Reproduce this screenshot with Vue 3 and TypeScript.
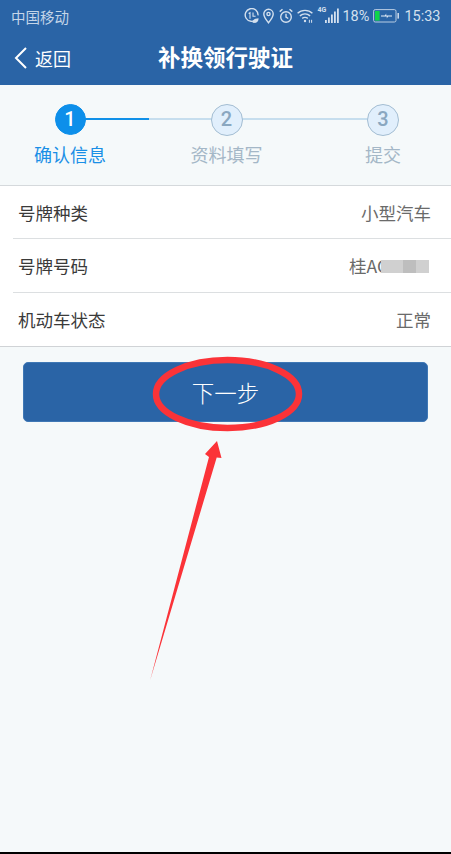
<script setup lang="ts">
interface Step { n: number; label: string; active: boolean }
interface Row { label: string; value: string; masked?: boolean }
const steps: Step[] = [
  { n: 1, label: '确认信息', active: true },
  { n: 2, label: '资料填写', active: false },
  { n: 3, label: '提交', active: false },
]
const rows: Row[] = [
  { label: '号牌种类', value: '小型汽车' },
  { label: '号牌号码', value: '桂AC', masked: true },
  { label: '机动车状态', value: '正常' },
]
</script>

<template>
  <div class="page">
    <header class="head">
      <div class="status">
        <span class="carrier">中国移动</span>
        <div class="status-right">
          <svg class="ic i1" width="15" height="16" viewBox="0 0 15 16" fill="none" stroke="#d4e0ee" stroke-width="1.4">
            <path d="M12.4 11.2A6.4 6.4 0 1 1 14 7.4" />
            <path d="M4.6 5.6 6 4.8v6M9 4.6v3.6h2.6" stroke-width="1.1" />
            <path d="M8.6 14.8c0-2.8 2-4.4 6-4.6 0 3.4-2 5.2-6 4.6z" fill="#d4e0ee" stroke="none" />
          </svg>
          <svg class="ic i2" width="11" height="16" viewBox="0 0 11 16" fill="none" stroke="#d4e0ee" stroke-width="1.4">
            <path d="M5.5 14.8C2.6 11.2.8 8.6.8 6a4.7 4.7 0 0 1 9.4 0c0 2.6-1.8 5.2-4.7 8.8z" />
            <circle cx="5.5" cy="6" r="1.6" />
          </svg>
          <svg class="ic i1" width="14" height="16" viewBox="0 0 14 16" fill="none" stroke="#d4e0ee" stroke-width="1.4">
            <circle cx="7" cy="9" r="5.3" />
            <path d="M7 5.8V9l2.3 1.5M.7 3.6l2.8-2.3M13.3 3.6l-2.8-2.3" />
          </svg>
          <svg class="ic i1" width="16" height="16" viewBox="0 0 16 16" fill="none" stroke="#d4e0ee" stroke-width="1.4">
            <path d="M.6 5.2C4.6 1.4 11.4 1.4 15.4 5.2M2.9 7.9c3-2.6 7.2-2.6 10.2 0M5.2 10.4c1.8-1.3 3.8-1.3 5.6 0" />
            <circle cx="8" cy="13" r="1.2" fill="#d4e0ee" stroke="none" />
            <path d="M12.4 11.8v3M14.6 11.8v3" stroke-width="1" />
          </svg>
          <div class="signal">
            <span class="net">4G</span>
            <svg width="14" height="15" viewBox="0 0 14 15" fill="#d4e0ee">
              <rect x="0" y="12" width="1.8" height="3" />
              <rect x="3" y="9.5" width="1.8" height="5.5" />
              <rect x="6" y="6.5" width="1.8" height="8.5" />
              <rect x="9" y="3.5" width="1.8" height="11.5" />
              <rect x="12" y="0.5" width="1.8" height="14.5" />
            </svg>
          </div>
          <span class="pct">18%</span>
          <svg class="batt" width="26" height="14" viewBox="0 0 26 14" fill="none">
            <rect x="0.6" y="0.6" width="22.4" height="12.4" rx="1.6" stroke="#b9cde3" stroke-width="1" />
            <rect x="2" y="2" width="4.6" height="9.6" fill="#0fd34a" />
            <rect x="24.4" y="4" width="1.6" height="5.6" fill="#c9d8ea" />
            <path d="M8 6.4h4l1.2-2v2.2H19v1h-4l-1.2 2V7.4H8z" fill="#e8eff7" />
          </svg>
          <span class="time">15:33</span>
        </div>
      </div>
      <div class="nav">
        <div class="back">
          <svg width="14" height="22" viewBox="0 0 14 22" fill="none" stroke="#fff" stroke-width="2">
            <path d="M12 1 2 11l10 10" />
          </svg>
          <span>返回</span>
        </div>
        <h1 class="title">补换领行驶证</h1>
      </div>
    </header>

    <section class="stepper">
      <div v-for="(s, i) in steps" :key="s.n" class="step" :class="{ on: s.active, last: i === steps.length - 1 }">
        <div class="node">{{ s.n }}</div>
        <div class="label">{{ s.label }}</div>
      </div>
    </section>

    <section class="list">
      <div v-for="r in rows" :key="r.label" class="row">
        <span class="k">{{ r.label }}</span>
        <span class="v" :class="{ masked: r.masked }">
          {{ r.value }}
          <span v-if="r.masked" class="mask">
            <i class="m1"></i><i class="m2"></i><i class="m3"></i>
          </span>
        </span>
      </div>
    </section>

    <div class="action">
      <button class="next" type="button">下一步</button>
    </div>

    <svg class="mark" width="451" height="852" viewBox="0 0 451 852" fill="none">
      <ellipse cx="227.5" cy="394" rx="71.5" ry="34" stroke="#fb3338" stroke-width="6.5" />
      <path d="M150.2 680 209 457 205 454 217 441 221.5 458 216.7 457.5 Z" fill="#fb3338" />
    </svg>

    <div class="edge"></div>
  </div>
</template>

<style scoped>
.page {
  position: relative;
  width: 451px;
  height: 854px;
  overflow: hidden;
  display: flex;
  flex-direction: column;
  background: #f5f9fa;
  font-family: "Noto Sans CJK SC", "Noto Sans", sans-serif;
}
.head {
  height: 85px;
  flex: none;
  background: #2a64a6;
  color: #fff;
}
.status {
  height: 32px;
  display: flex;
  align-items: center;
  justify-content: space-between;
  padding: 0 10.5px 0 11px;
}
.carrier {
  font-size: 14.5px;
  color: #c4d5e8;
}
.status-right {
  display: flex;
  align-items: center;
  color: #d4e0ee;
  font-family: Roboto, sans-serif;
}
.ic {
  flex: none;
}
.i1 {
  margin-right: 4px;
}
.i2 {
  margin-right: 5px;
}
.signal {
  position: relative;
  width: 22px;
  height: 16px;
  margin-right: 3px;
  display: flex;
  justify-content: flex-end;
}
.net {
  position: absolute;
  left: 0;
  top: -2px;
  font-size: 7px;
  font-weight: 700;
}
.pct {
  width: 26px;
  font-size: 14.5px;
  margin-right: 5px;
}
.batt {
  margin-right: 5px;
  flex: none;
}
.time {
  font-size: 14.5px;
}
.nav {
  position: relative;
  height: 48px;
  display: flex;
  align-items: center;
  justify-content: center;
}
.back {
  position: absolute;
  left: 14px;
  top: 13px;
  display: flex;
  align-items: center;
  gap: 7px;
  font-size: 18px;
}
.title {
  margin: 0;
  font-size: 22.5px;
  font-weight: 700;
  line-height: 30px;
}
.stepper {
  height: 101px;
  flex: none;
  display: flex;
  justify-content: center;
  padding: 18.5px 0 0 2px;
  box-sizing: border-box;
  overflow: hidden;
  border-bottom: 1px solid #d5d9dc;
}
.step {
  position: relative;
  flex: 0 0 156.5px;
  display: flex;
  flex-direction: column;
  align-items: center;
}
.step::after {
  content: "";
  position: absolute;
  left: 78px;
  top: 14.5px;
  width: 157px;
  height: 2px;
  background: #c6deee;
}
.step.on::after {
  width: 79px;
  background: #1090e8;
}
.step.on::before {
  content: "";
  position: absolute;
  left: 78px;
  top: 14.5px;
  width: 157px;
  height: 2px;
  background: #c6deee;
}
.step.last::after {
  display: none;
}
.node {
  position: relative;
  z-index: 1;
  width: 32px;
  height: 32px;
  box-sizing: border-box;
  border: 1.5px solid #a3bdd2;
  border-radius: 50%;
  background: #e1effc;
  color: #8aa7c0;
  font-family: Roboto, sans-serif;
  font-size: 20px;
  font-weight: 500;
  line-height: 29px;
  text-align: center;
}
.on .node {
  width: 31px;
  height: 31px;
  border-color: #0d8fea;
  background: #0d8fea;
  color: #fff;
  margin-bottom: 1px;
}
.label {
  margin-top: 6px;
  font-size: 18px;
  line-height: 24px;
  color: #a4b7c7;
}
.on .label {
  color: #1a8fe6;
}
.list {
  flex: none;
  background: #fff;
  border-bottom: 1px solid #d0d3d6;
  padding-left: 13px;
}
.row {
  height: 54px;
  box-sizing: border-box;
  display: flex;
  align-items: center;
  justify-content: space-between;
  padding: 0 20px 0 5px;
  font-size: 17.5px;
  color: #3a3a3a;
  border-bottom: 1px solid #dcdfe1;
}
.row:first-child {
  height: 53px;
}
.row:last-child {
  height: 53px;
  border-bottom: none;
}
.v {
  color: #6a6a6a;
}
.v.masked {
  display: flex;
  align-items: center;
  width: 82px;
  overflow: hidden;
  white-space: nowrap;
  position: relative;
}
.mask {
  position: absolute;
  left: 32px;
  top: 50%;
  margin-top: -6px;
  height: 13px;
  width: 50px;
  display: flex;
  background: #fff;
}
.mask i {
  display: block;
  height: 13px;
  background: #d0d0d0;
}
.m1 { width: 22px; }
.m2 { width: 13px; background: #bebebe !important; }
.m3 { width: 13px; }
.action {
  flex: none;
  padding: 15px 23px 0;
}
.next {
  display: block;
  width: 405px;
  height: 60px;
  border: 1px solid #3f78b5;
  border-radius: 5px;
  background: #2a64a6;
  color: #fff;
  font-family: inherit;
  font-size: 22.5px;
  font-weight: 300;
  padding: 0;
}
.mark {
  position: absolute;
  left: 0;
  top: 0;
  pointer-events: none;
}
.edge {
  position: absolute;
  left: 0;
  right: 0;
  bottom: 0;
  height: 2px;
  background: #000;
}
</style>
